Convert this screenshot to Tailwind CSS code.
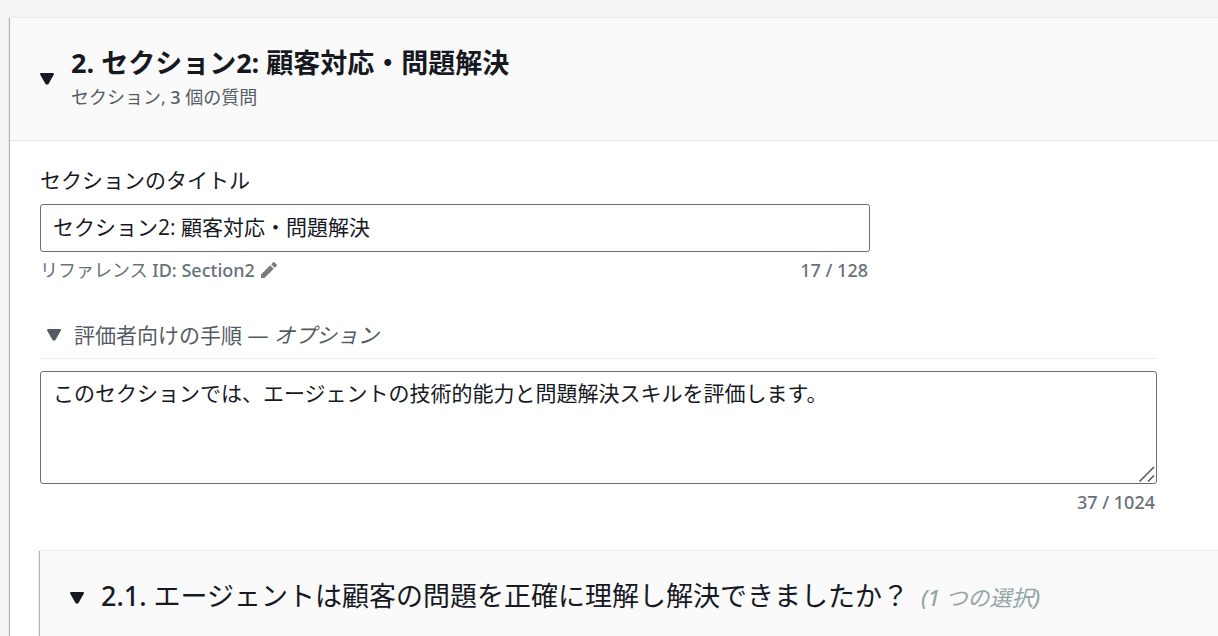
<!DOCTYPE html>
<html lang="ja">
<head>
    <meta charset="UTF-8" />
    <meta name="viewport" content="width=device-width, initial-scale=1.0" />
    <title>評価フォーム</title>
    <!-- Tailwind CSS CDN -->
    <script src="https://cdn.jsdelivr.net/npm/@tailwindcss/browser@4"></script>
</head>
<body class="h-screen overflow-hidden bg-[#f4f4f4] pt-[17px] pl-[10px] font-['Open_Sans','Noto_Sans_CJK_JP',sans-serif] text-[#16191f]">
    <!-- Section card -->
    <section class="min-h-screen bg-white border-t border-[#eaeded] shadow-[-1px_1px_1px_0_#aab7b8]">
        <header class="flex items-center h-[123px] pl-[29px] bg-[#fafafa] border-b border-[#e6e8e8]">
            <button type="button" aria-label="セクションを折りたたむ" aria-expanded="true" class="mr-[16px]">
                <svg class="block w-4 h-3" viewBox="0 0 16 12" fill="#16191f" stroke="#16191f" stroke-width="2" stroke-linejoin="round"><path d="M2 1h12L8.600 10.500h-1.200z" /></svg>
            </button>
            <div>
                <h2 class="text-[27px] leading-[36px] font-bold">2. セクション2: 顧客対応・問題解決</h2>
                <p class="text-[18px] leading-[32px] text-[#545b64]">セクション, <span class="font-['Noto_Sans'] font-medium">3</span> 個の質問</p>
            </div>
        </header>

        <div class="pl-[30px] pt-[24px]">
            <div class="pr-[61px]">
                <!-- Section title -->
                <div class="w-3/4 max-w-[830px]">
                    <label for="title" class="block text-[21px] leading-[30px]">セクションのタイトル</label>
                    <input id="title" type="text" value="セクション2: 顧客対応・問題解決" class="block w-full h-[48px] mt-[9px] px-3 pb-1 bg-white border border-[#687078] rounded-[3px] text-[21px]" />
                    <div class="flex justify-between mt-[2px] pr-[2px] text-[18px] leading-[32px] text-[#687078]">
                        <span class="flex items-center gap-[5px]">
                            <span>リファレンス <span class="font-['Noto_Sans'] font-medium">ID: Section2</span></span>
                            <button type="button" aria-label="リファレンス ID を編集">
                                <svg class="block w-[18px] h-[18px]" viewBox="0 0 18 18" fill="#7a7a7a"><path d="M1 13.500v3.500h3.500L13.700 7.800 10.200 4.300zM11.200 3.300l3.500 3.500 1.900-1.900c.5-.5.5-1 0-1.500l-2-2c-.5-.5-1-.5-1.500 0z" /></svg>
                            </button>
                        </span>
                        <span class="font-['Noto_Sans'] font-medium">17 / 128</span>
                    </div>
                </div>

                <!-- Instructions for evaluators -->
                <div class="mt-[29px] pl-[6px] pb-[3px] border-b border-[#eaeded]">
                    <button type="button" aria-expanded="true" class="flex items-center gap-3 text-[21px] leading-[40px] text-[#545b64]">
                        <svg class="block w-4 h-3" viewBox="0 0 16 12" fill="#545b64" stroke="#545b64" stroke-width="2" stroke-linejoin="round"><path d="M2 1h12L8.600 10.500h-1.200z" /></svg>
                        <span>評価者向けの手順 — <i>オプション</i></span>
                    </button>
                </div>
                <div class="relative mt-3">
                    <textarea aria-label="評価者向けの手順" class="block w-full h-[113px] px-3 py-[5px] bg-white border border-[#687078] rounded-[3px] text-[21px] leading-[32px] resize-none">このセクションでは、エージェントの技術的能力と問題解決スキルを評価します。</textarea>
                    <!-- Resize grip -->
                    <svg class="absolute right-[2px] bottom-[2px] w-4 h-4 pointer-events-none" viewBox="0 0 16 16" fill="none" stroke="#555" stroke-width="1.500"><path d="M.5 15.500L15 1M9 15.500L15 9.500" /></svg>
                </div>
                <p class="mt-[2px] pr-[2px] text-right text-[18px] leading-[32px] font-['Noto_Sans'] font-medium text-[#687078]">37 / 1024</p>
            </div>

            <!-- Question card -->
            <section class="mt-[32px] h-32 bg-[#fafafa] border-t border-[#eaeded] shadow-[-1px_1px_1px_0_#aab7b8]">
                <header class="flex items-center h-[90px] pl-[29px]">
                    <button type="button" aria-label="質問を折りたたむ" aria-expanded="true" class="mt-1 mr-[16px]">
                        <svg class="block w-4 h-3" viewBox="0 0 16 12" fill="#16191f" stroke="#16191f" stroke-width="2" stroke-linejoin="round"><path d="M2 1h12L8.600 10.500h-1.200z" /></svg>
                    </button>
                    <h3 class="flex items-baseline gap-3 text-[27px] leading-[36px] whitespace-nowrap">
                        <span><span class="font-['Noto_Sans'] font-medium">2.1.</span> エージェントは顧客の問題を正確に理解し解決できましたか？</span>
                        <i class="text-[22px] text-[#95a5a6]"><span class="font-['Noto_Sans'] font-medium">(1</span> つの選択<span class="font-['Noto_Sans'] font-medium">)</span></i>
                    </h3>
                </header>
            </section>
        </div>
    </section>
</body>
</html>
